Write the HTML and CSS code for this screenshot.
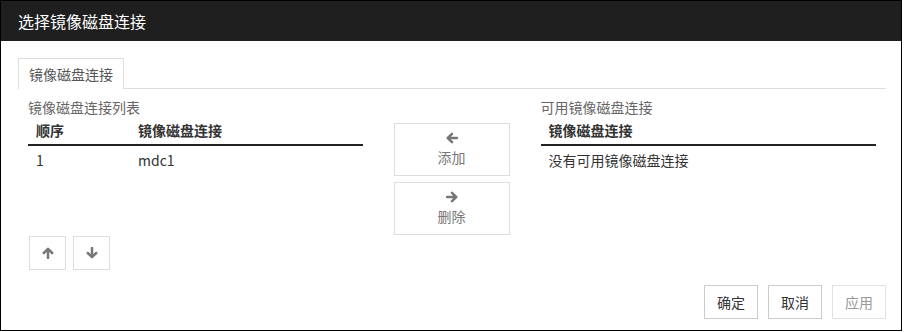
FILE: index.html
```html
<!DOCTYPE html>
<html lang="zh-CN">
<head>
  <meta charset="UTF-8">
  <title>选择镜像磁盘连接</title>
  <link rel="stylesheet" href="styles.css">
</head>
<body>

  <div class="dialog">
    <div class="dialog-header">选择镜像磁盘连接</div>

    <div class="dialog-body">
      <div class="tabs">
        <span class="tab">镜像磁盘连接</span>
      </div>

      <div class="panels">
        <div class="panel">
          <div class="panel-label">镜像磁盘连接列表</div>
          <div class="list-area">
            <table class="list">
              <thead>
                <tr><th class="col-order">顺序</th><th>镜像磁盘连接</th></tr>
              </thead>
              <tbody>
                <tr><td class="col-order">1</td><td>mdc1</td></tr>
              </tbody>
            </table>
          </div>
          <div class="order-buttons">
            <button class="btn btn-icon" type="button">
              <svg width="12" height="12" viewBox="0 0 12 12"><path d="M6 11V2M1.8 6 6 1.8 10.2 6" /></svg>
            </button>
            <button class="btn btn-icon" type="button">
              <svg width="12" height="12" viewBox="0 0 12 12"><path d="M6 1v9M1.8 6 6 10.2 10.2 6" /></svg>
            </button>
          </div>
        </div>

        <div class="move-buttons">
          <button class="btn btn-move" type="button">
            <svg width="12" height="12" viewBox="0 0 12 12"><path d="M11 6H2M6 1.8 1.8 6 6 10.2" /></svg>
            <span>添加</span>
          </button>
          <button class="btn btn-move" type="button">
            <svg width="12" height="12" viewBox="0 0 12 12"><path d="M1 6h9M6 1.8 10.2 6 6 10.2" /></svg>
            <span>删除</span>
          </button>
        </div>

        <div class="panel panel-right">
          <div class="panel-label">可用镜像磁盘连接</div>
          <table class="list">
            <thead>
              <tr><th>镜像磁盘连接</th></tr>
            </thead>
            <tbody>
              <tr><td>没有可用镜像磁盘连接</td></tr>
            </tbody>
          </table>
        </div>
      </div>
    </div>

    <div class="dialog-footer">
      <button class="btn btn-footer" type="button">确定</button>
      <button class="btn btn-footer" type="button">取消</button>
      <button class="btn btn-footer" type="button" disabled>应用</button>
    </div>
  </div>

</body>
</html>
```

FILE: styles.css
```css
body {
  margin: 0;
  font-family: "Noto Sans CJK SC", "Noto Sans", sans-serif;
  font-size: 14px;
  color: #333;
  background-color: #fff;
}

.dialog {
  width: 902px;
  height: 331px;
  box-sizing: border-box;
  border: 1px solid #000;
  display: flex;
  flex-direction: column;
}

.dialog-header {
  height: 40px;
  line-height: 40px;
  padding-left: 17px;
  background-color: #1f1f1f;
  color: #fff;
  font-size: 16px;
}

.dialog-body {
  padding: 16px 15px 0 17px;
}

.tabs {
  border-bottom: 1px solid #ddd;
  height: 31px;
}

.tab {
  display: inline-block;
  height: 31px;
  line-height: 30px;
  padding: 0 10px;
  box-sizing: border-box;
  border: 1px solid #ddd;
  border-bottom: none;
  background-color: #fff;
  color: #555;
  position: relative;
  top: 1px;
}

.panels {
  display: flex;
  gap: 31px;
  padding: 8px 10px 0 10px;
}

.panel {
  width: 335px;
}

.panel-right {
  width: 336px;
}

.panel-label {
  line-height: 20px;
  color: #666;
}

.list-area {
  height: 119px;
}

.list {
  width: 100%;
  border-collapse: collapse;
}

.list th {
  text-align: left;
  font-weight: bold;
  line-height: 19px;
  padding: 4px 8px 4px 8px;
  border-bottom: 2px solid #222;
  color: #333;
}

.list td {
  line-height: 20px;
  padding: 4px 8px;
}

.list .col-order {
  width: 86px;
}

.order-buttons {
  display: flex;
  gap: 7px;
  padding-left: 1px;
}

.btn {
  font-family: inherit;
  font-size: 14px;
  background-color: #fff;
  border: 1px solid #ddd;
  color: #777;
  padding: 0;
  cursor: pointer;
  box-sizing: border-box;
}

.btn svg {
  fill: none;
  stroke: #777;
  stroke-width: 2.5;
  stroke-linecap: round;
  stroke-linejoin: round;
}

.btn-icon {
  width: 37px;
  height: 34px;
  display: flex;
  align-items: center;
  justify-content: center;
}

.move-buttons {
  display: flex;
  flex-direction: column;
  gap: 6px;
  margin-top: 26px;
}

.btn-move {
  width: 116px;
  height: 53px;
  display: flex;
  flex-direction: column;
  align-items: center;
  justify-content: center;
  gap: 4px;
  padding-bottom: 2px;
}

.btn-move span {
  line-height: 18px;
}

.dialog-footer {
  margin-top: auto;
  display: flex;
  justify-content: flex-end;
  gap: 10px;
  padding: 0 15px 11px 0;
}

.btn-footer {
  width: 54px;
  height: 34px;
  border-color: #ccc;
  color: #333;
}

.btn-footer:disabled {
  border-color: #e2e2e2;
  color: #999;
  cursor: default;
}
```
